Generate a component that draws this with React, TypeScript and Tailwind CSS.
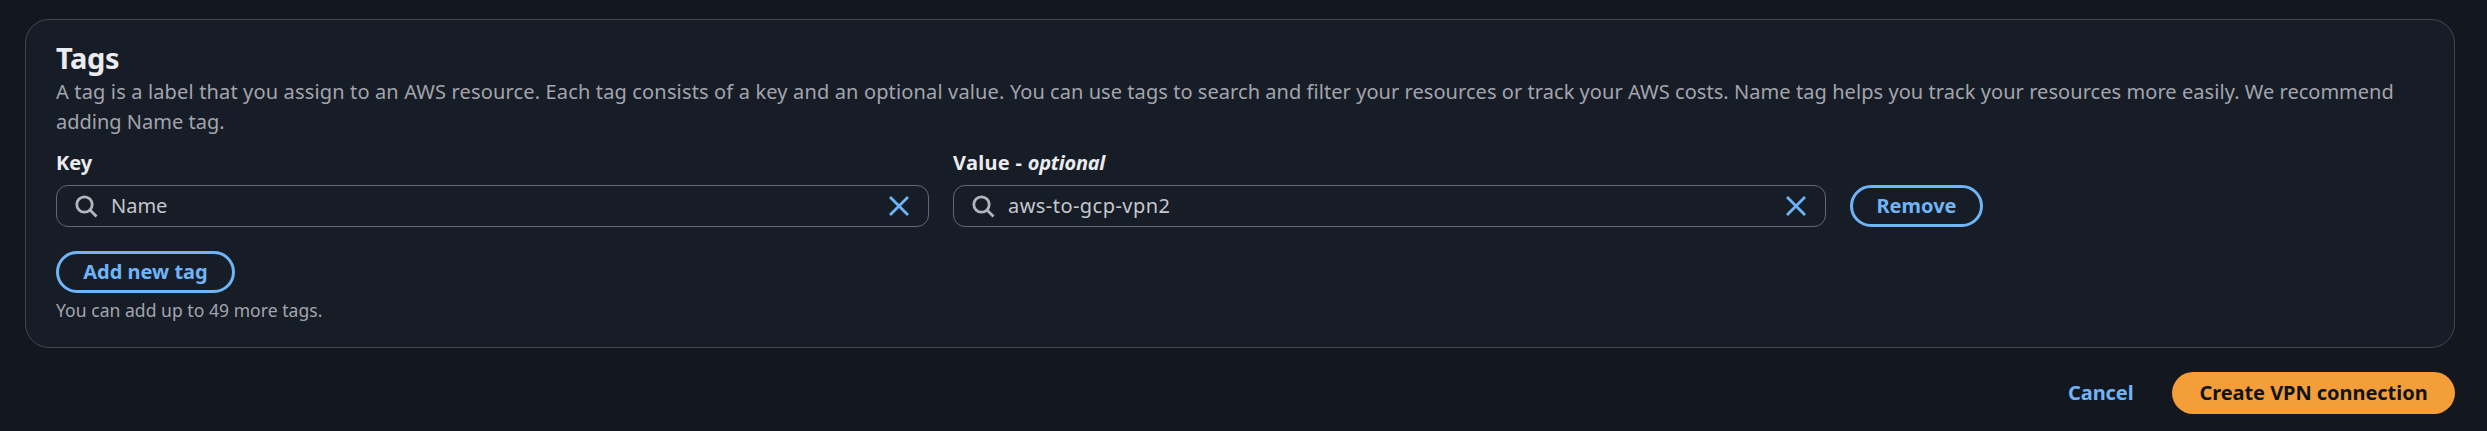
import type { ReactNode } from "react";

function SearchIcon() {
  return (
    <svg className="h-6 w-6 shrink-0" viewBox="0 0 24 24" fill="none" stroke="#b4b4bb" strokeWidth="2.8">
      <circle cx="10.5" cy="10.5" r="7.7" />
      <path d="M16 16l6.5 6.5" />
    </svg>
  );
}

function ClearIcon() {
  return (
    <svg className="h-6 w-6 shrink-0" viewBox="0 0 24 24" fill="none" stroke="#70b4f8" strokeWidth="2.8">
      <path d="M3 3l18 18M21 3L3 21" />
    </svg>
  );
}

function Field({ label, value }: { label: ReactNode; value: ReactNode }) {
  return (
    <div className="w-[873px]">
      <div className="h-[30px] text-[20px] leading-[30px] font-bold text-[#ebebf0]">{label}</div>
      <div className="mt-[7px] flex h-[42px] items-center rounded-[12px] border border-[#656871] pr-[17px] pl-[17px]">
        <SearchIcon />
        <div className="ml-[13px] flex-1 text-[20px] leading-[30px] text-[#c6c6cd]">{value}</div>
        <ClearIcon />
      </div>
    </div>
  );
}

export default function App() {
  return (
    <div className="h-[431px] w-[2487px] bg-[#13171f] pt-[19px] pl-[25px] font-['Noto_Sans',sans-serif] whitespace-nowrap">
      <section className="h-[329px] w-[2430px] rounded-[24px] border border-[#424650] bg-[#161d26] pt-[20px] pl-[30px]">
        <h2 className="text-[29px] leading-[36px] font-bold text-[#ebebf0]">
          <span className="tracking-[-0.35px]">Tags</span>
        </h2>
        <div className="mt-px text-[20px] leading-[30px] text-[#a4a4ad]">
          <div>
            <span className="tracking-[0.15px]">A tag is a label that you assign to an AWS resource. </span>
            <span className="tracking-[0.15px]">Each tag consists of a key and an optional value. </span>
            <span className="tracking-[0.055px]">
              You can use tags to search and filter your resources or track your AWS costs.{" "}
            </span>
            <span className="tracking-[0.065px]">Name tag helps you track your resources more easily. </span>
            <span className="tracking-[0px]">We recommend</span>
          </div>
          <div>
            <span>adding Name tag.</span>
          </div>
        </div>
        <div className="mt-[11px] flex items-end gap-6">
          <Field label={<span>Key</span>} value={<span>Name</span>} />
          <Field
            label={
              <span className="tracking-[0.3px]">
                Value - <i className="tracking-[-0.25px]">optional</i>
              </span>
            }
            value={<span className="tracking-[0.45px]">aws-to-gcp-vpn2</span>}
          />
          <button className="flex h-[42px] w-[133px] items-center justify-center rounded-[21px] border-3 border-[#70b4f8] text-[20px] leading-[30px] font-bold text-[#70b4f8]">
            <span>Remove</span>
          </button>
        </div>
        <button className="mt-[24px] flex h-[42px] w-[179px] items-center justify-center rounded-[21px] border-3 border-[#70b4f8] text-[20px] leading-[30px] font-bold text-[#70b4f8]">
          <span>Add new tag</span>
        </button>
        <p className="mt-[5px] text-[17.5px] leading-[24px] text-[#a4a4ad]">
          <span className="tracking-[0.05px]">You can add up to 49 more tags.</span>
        </p>
      </section>
      <footer className="mt-[24px] flex w-[2430px] items-center justify-end text-[20px] leading-[30px] font-bold">
        <button className="flex h-[42px] w-[104px] items-center text-[#70b4f8]">
          <span className="tracking-[-0.08px]">Cancel</span>
        </button>
        <button className="flex h-[42px] w-[283px] items-center justify-center rounded-[21px] bg-[#f39e39] text-[#0f141a]">
          <span className="tracking-[-0.05px]">Create VPN connection</span>
        </button>
      </footer>
    </div>
  );
}
